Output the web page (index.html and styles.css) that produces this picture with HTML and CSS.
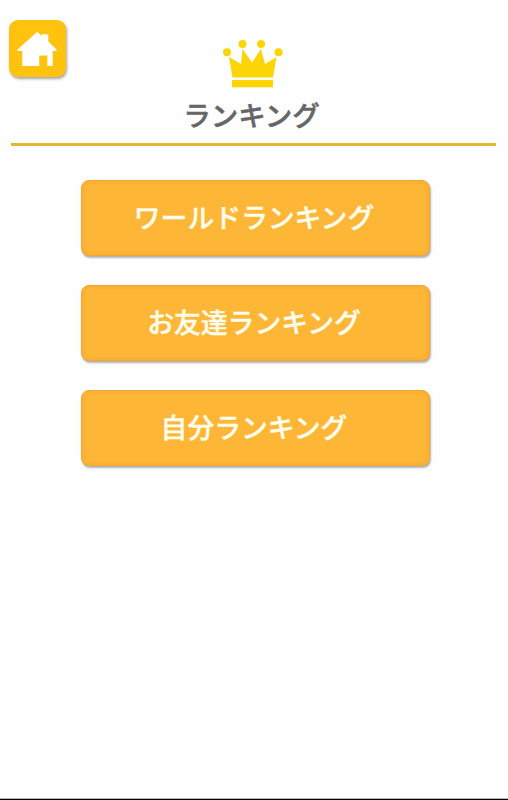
FILE: index.html
```html
<!DOCTYPE html>
<html lang="ja">
<head>
    <meta charset="UTF-8">
    <meta name="viewport" content="width=device-width, initial-scale=1.0">
    <title>ランキング</title>
    <link rel="stylesheet" href="styles.css">
</head>
<body>
    <header class="header">
        <a href="#" class="home" aria-label="ホーム">
            <svg width="41" height="36" viewBox="0 0 41 36">
                <path fill="#fff" d="M20.3 0.7 L25 4.9 V3.2 H31.3 V10.6 L39.5 18.5 V20 H35.7 V35 H30.3 V24.5 H22.3 V35 H5.3 V20 H0.5 V18.5 Z"/>
            </svg>
        </a>
        <div class="title">
            <svg class="crown" width="60" height="48" viewBox="0 0 60 48">
                <g fill="#fbd505">
                    <circle cx="4" cy="12.3" r="4"/>
                    <circle cx="19.5" cy="4" r="4"/>
                    <circle cx="38" cy="4" r="4"/>
                    <circle cx="55.5" cy="12.3" r="4"/>
                    <path d="M6 17 L18 24 L19.5 9 L29 22.5 L38 9 L42 24 L53.5 17 L50 37.5 H9.5 Z"/>
                    <rect x="9" y="40" width="41" height="7.3"/>
                </g>
            </svg>
            <h1>ランキング</h1>
        </div>
    </header>

    <main class="menu">
        <a href="#" class="btn">ワールドランキング</a>
        <a href="#" class="btn">お友達ランキング</a>
        <a href="#" class="btn">自分ランキング</a>
    </main>

    <footer class="bottom"></footer>
</body>
</html>
```

FILE: styles.css
```css
* {
    box-sizing: border-box;
}
body {
    font-family: "Noto Sans CJK JP", sans-serif;
    background-color: #fefefe;
    margin: 0;
    height: 800px;
    display: flex;
    flex-direction: column;
    overflow: hidden;
}
a {
    text-decoration: none;
}
.header {
    display: grid;
    grid-template-columns: 57px 1fr 57px;
    height: 146px;
    margin: 0 12px 0 11px;
    border-bottom: 3px solid #e2b82f;
}
.home {
    display: flex;
    justify-content: center;
    align-items: center;
    width: 57px;
    height: 57px;
    margin: 20px 0 0 -2px;
    background-color: #fec20f;
    border-radius: 9px;
    box-shadow: 1px 2px 3px rgba(0, 0, 0, 0.35);
}
.title {
    display: flex;
    flex-direction: column;
    align-items: center;
    padding: 40px 2px 0 0;
}
h1 {
    margin: 6px 2px 0 0;
    font-size: 27.5px;
    font-weight: 500;
    line-height: 40px;
    color: #666;
    -webkit-text-stroke: 0.5px #666;
}
.menu {
    display: flex;
    flex-direction: column;
    align-items: center;
    gap: 29px;
    flex: 1;
    padding: 34px 0 0 2px;
}
.btn {
    display: flex;
    justify-content: center;
    width: 349px;
    height: 76px;
    padding: 16px 2px 0 0;
    border: 1px solid #f1a72f;
    border-radius: 8px;
    background-color: #feb637;
    box-shadow: inset 0 0 0 3px #fdb134, 1px 2px 2px rgba(0, 0, 0, 0.3);
    color: #fffdec;
    font-size: 26.8px;
    font-weight: 500;
    line-height: 40px;
    -webkit-text-stroke: 0.4px #fffdec;
}
/* linha no fim da tela */
.bottom {
    height: 2px;
    background-color: #000;
    border-top: 1px solid #bbb;
}
```
